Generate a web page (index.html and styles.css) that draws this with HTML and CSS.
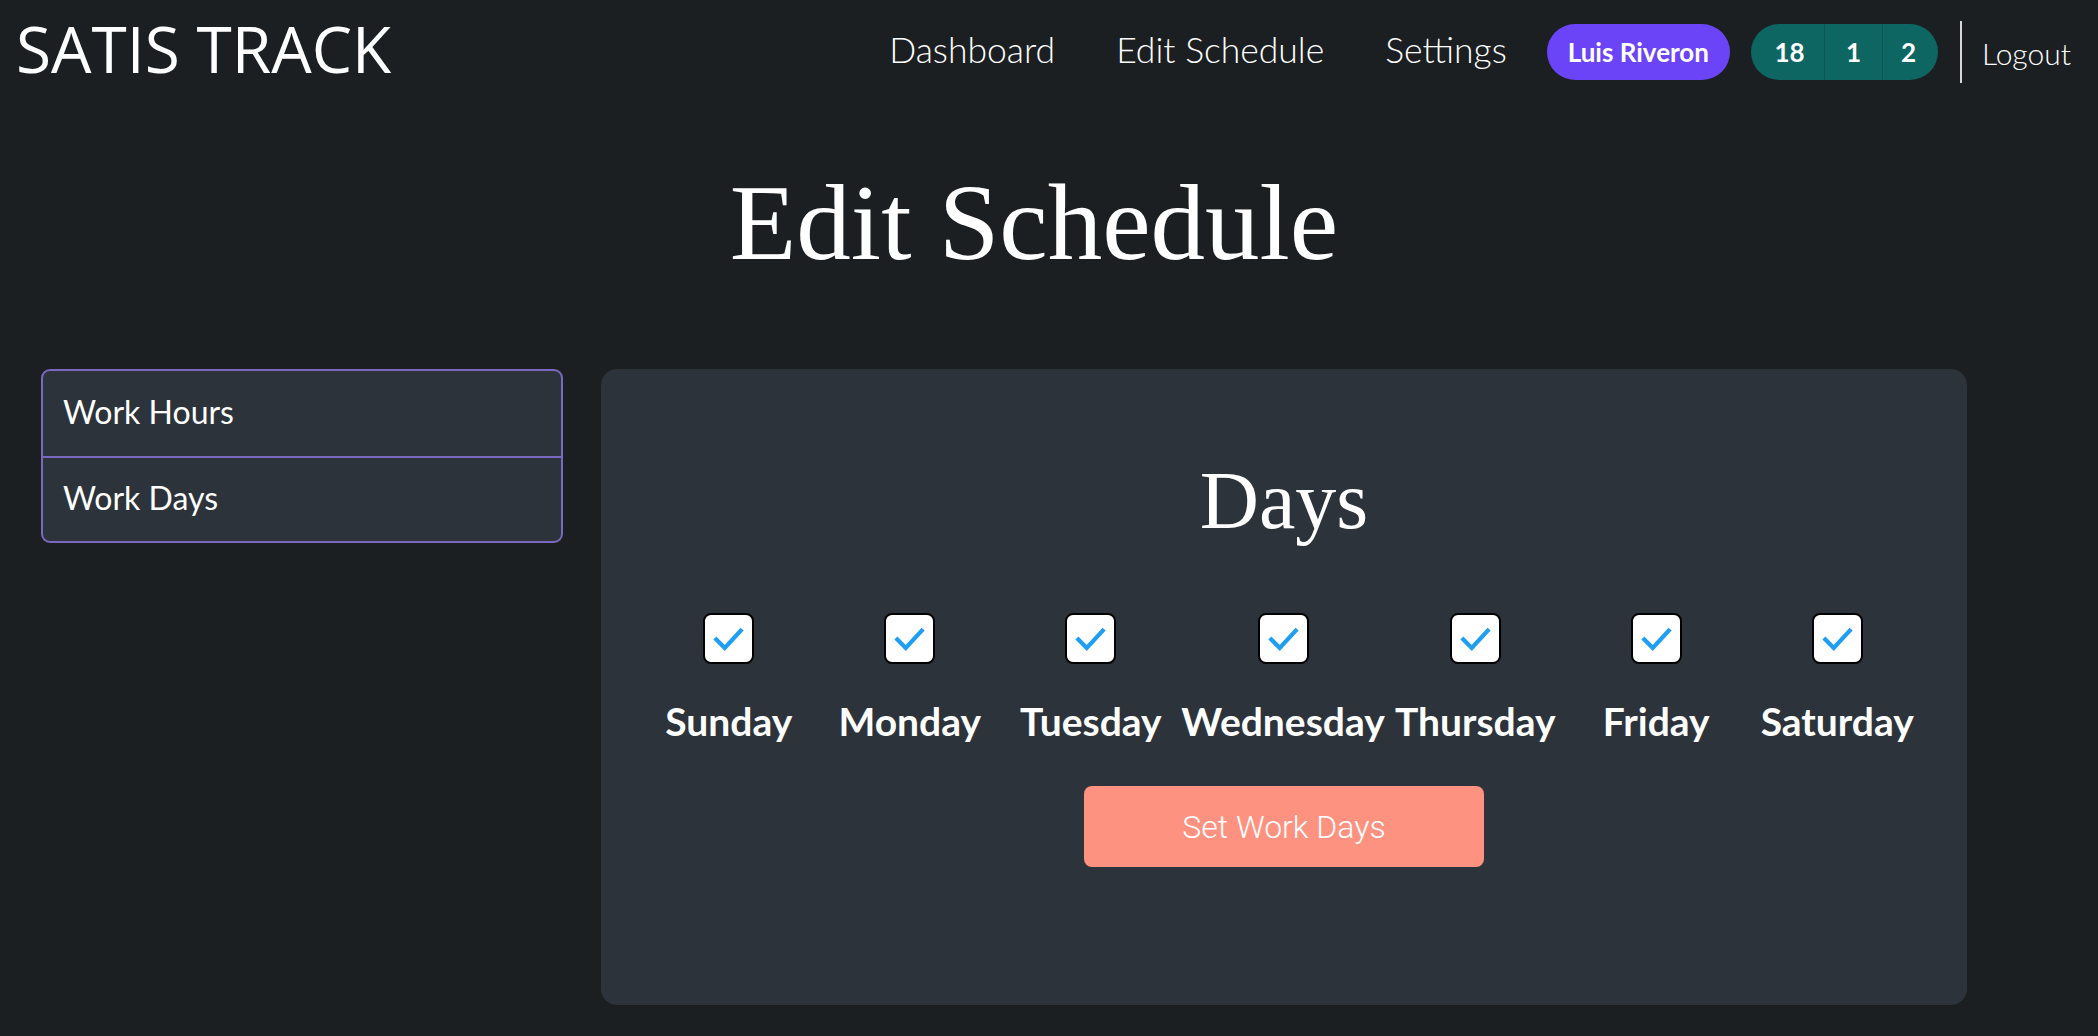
FILE: index.html
```html
<!DOCTYPE html>
<html lang="en">
<head>
<meta charset="utf-8">
<title>Satis Track - Edit Schedule</title>
<link rel="stylesheet" href="styles.css">
</head>
<body>
<header class="topbar">
  <div class="logo">SATIS TRACK</div>
  <nav class="nav">
    <a class="nav-link" href="#">Dashboard</a>
    <a class="nav-link" href="#">Edit Schedule</a>
    <a class="nav-link" href="#">Settings</a>
    <span class="user-pill">Luis Riveron</span>
    <span class="stats-pill">
      <span class="stat stat-first">18</span>
      <span class="stat">1</span>
      <span class="stat stat-last">2</span>
    </span>
    <span class="nav-divider"></span>
    <a class="logout" href="#">Logout</a>
  </nav>
</header>

<h1 class="page-title">Edit Schedule</h1>

<main class="content">
  <aside class="side-menu">
    <div class="side-item">Work Hours</div>
    <div class="side-item">Work Days</div>
  </aside>

  <section class="card">
    <h2 class="card-title">Days</h2>
    <div class="days">
      <label class="day"><span class="check"><svg viewBox="0 0 50 50" width="50" height="50"><path d="M10.5 24.5 L21 35 L39.5 15" fill="none" stroke="#1f9ff4" stroke-width="4.5"/></svg></span><span class="day-name">Sunday</span></label>
      <label class="day"><span class="check"><svg viewBox="0 0 50 50" width="50" height="50"><path d="M10.5 24.5 L21 35 L39.5 15" fill="none" stroke="#1f9ff4" stroke-width="4.5"/></svg></span><span class="day-name">Monday</span></label>
      <label class="day"><span class="check"><svg viewBox="0 0 50 50" width="50" height="50"><path d="M10.5 24.5 L21 35 L39.5 15" fill="none" stroke="#1f9ff4" stroke-width="4.5"/></svg></span><span class="day-name">Tuesday</span></label>
      <label class="day"><span class="check"><svg viewBox="0 0 50 50" width="50" height="50"><path d="M10.5 24.5 L21 35 L39.5 15" fill="none" stroke="#1f9ff4" stroke-width="4.5"/></svg></span><span class="day-name">Wednesday</span></label>
      <label class="day"><span class="check"><svg viewBox="0 0 50 50" width="50" height="50"><path d="M10.5 24.5 L21 35 L39.5 15" fill="none" stroke="#1f9ff4" stroke-width="4.5"/></svg></span><span class="day-name">Thursday</span></label>
      <label class="day"><span class="check"><svg viewBox="0 0 50 50" width="50" height="50"><path d="M10.5 24.5 L21 35 L39.5 15" fill="none" stroke="#1f9ff4" stroke-width="4.5"/></svg></span><span class="day-name">Friday</span></label>
      <label class="day"><span class="check"><svg viewBox="0 0 50 50" width="50" height="50"><path d="M10.5 24.5 L21 35 L39.5 15" fill="none" stroke="#1f9ff4" stroke-width="4.5"/></svg></span><span class="day-name">Saturday</span></label>
    </div>
    <button class="submit" type="button">Set Work Days</button>
  </section>
</main>
</body>
</html>
```

FILE: styles.css
```css
* {
  box-sizing: border-box;
}

html, body {
  margin: 0;
  padding: 0;
}

body {
  background: #1c1f22;
  color: #ffffff;
  font-family: "Lato", "Open Sans", sans-serif;
  width: 2098px;
  height: 1036px;
  overflow: hidden;
}

.topbar {
  display: flex;
  align-items: center;
  justify-content: space-between;
  height: 104px;
  padding: 0 27px 0 16px;
}

.logo {
  font-family: "Open Sans", sans-serif;
  font-weight: 500;
  font-size: 64px;
  line-height: 1;
  letter-spacing: 0;
  margin-top: -6px;
}

.nav {
  display: flex;
  align-items: center;
}

.nav-link {
  color: #ffffff;
  text-decoration: none;
  font-family: "Lato", sans-serif;
  font-weight: 300;
  font-size: 35.5px;
  line-height: 1;
  margin-right: 61px;
  margin-top: -4px;
}

.nav-link:nth-child(3) {
  margin-right: 40px;
}

.user-pill {
  display: flex;
  align-items: center;
  height: 56px;
  padding: 0 21px;
  border-radius: 28px;
  background: #6b44f7;
  font-family: "Lato", sans-serif;
  font-weight: 700;
  font-size: 26px;
  margin-right: 21px;
}

.stats-pill {
  display: flex;
  height: 56px;
  border-radius: 28px;
  background: #0d6662;
  overflow: hidden;
  margin-right: 22px;
}

.stat {
  display: flex;
  align-items: center;
  justify-content: center;
  width: 58px;
  font-family: "Lato", sans-serif;
  font-weight: 700;
  font-size: 26px;
  border-left: 1px solid #0a5653;
}

.stat-first {
  width: 73px;
  border-left: none;
  padding-left: 4px;
}

.stat-last {
  width: 56px;
  padding-right: 4px;
}

.nav-divider {
  width: 2px;
  height: 62px;
  background: #d8d8d8;
  margin-right: 20px;
}

.logout {
  color: #ffffff;
  text-decoration: none;
  font-family: "Lato", sans-serif;
  font-weight: 300;
  font-size: 30px;
  line-height: 1;
  margin-top: 1px;
}

.page-title {
  margin: 64px 0 0 0;
  padding-right: 30px;
  text-align: center;
  font-family: "Liberation Serif", "DejaVu Serif", serif;
  font-weight: 400;
  font-size: 109px;
  line-height: 1;
}

.content {
  display: flex;
  align-items: flex-start;
  gap: 38px;
  margin-top: 92px;
  padding-left: 41px;
}

.side-menu {
  width: 522px;
  border: 2px solid #7a68c0;
  border-radius: 9px;
  background: #2d333b;
  overflow: hidden;
}

.side-item {
  display: flex;
  align-items: center;
  height: 85px;
  padding-left: 20px;
  padding-bottom: 4px;
  font-family: "Lato", sans-serif;
  font-weight: 400;
  font-size: 32px;
}

.side-item + .side-item {
  border-top: 2px solid #7a68c0;
}

.card {
  width: 1366px;
  height: 636px;
  background: #2d333b;
  border-radius: 16px;
  padding-top: 91px;
  display: flex;
  flex-direction: column;
  align-items: center;
}

.card-title {
  margin: 0;
  font-family: "Liberation Serif", "DejaVu Serif", serif;
  font-weight: 400;
  font-size: 82px;
  line-height: 1;
}

.days {
  display: flex;
  margin-top: 71px;
  margin-left: -2px;
}

.day {
  display: flex;
  flex-direction: column;
  align-items: center;
  min-width: 181px;
}

.check {
  display: block;
  width: 51px;
  height: 51px;
  background: #ffffff;
  border: 2px solid #000000;
  border-radius: 8px;
  overflow: hidden;
}

.check svg {
  display: block;
  width: 47px;
  height: 47px;
}

.day-name {
  margin-top: 38px;
  font-family: "Lato", sans-serif;
  font-weight: 700;
  font-size: 39px;
  line-height: 1;
}

.submit {
  margin-top: 45px;
  width: 400px;
  height: 81px;
  border: none;
  border-radius: 8px;
  background: #fe9280;
  color: #ffffff;
  font-family: "Roboto", sans-serif;
  font-weight: 300;
  font-size: 32px;
  padding: 0;
}
```
